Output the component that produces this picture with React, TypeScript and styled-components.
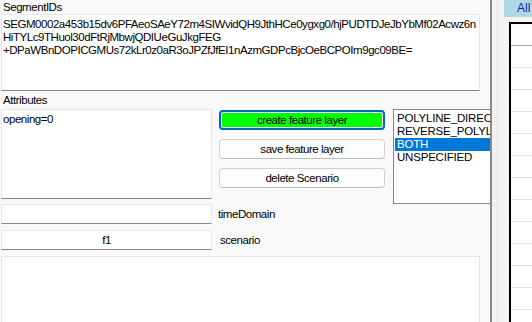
import React from "react";
import styled, { createGlobalStyle } from "styled-components";

const GlobalStyle = createGlobalStyle`
  html, body {
    margin: 0;
    padding: 0;
    background: #f9f9f9;
  }
  body {
    font-family: "Liberation Sans", Arial, sans-serif;
    font-size: 11.5px;
    letter-spacing: -0.45px;
    color: #000;
  }
`;

const Window = styled.div`
  display: grid;
  grid-template-columns: 490px 14px 28px;
  grid-template-rows: 322px;
  width: 532px;
  height: 322px;
  overflow: hidden;
  background: #f9f9f9;
`;

const LeftPane = styled.div`
  min-width: 0;
  padding-left: 1px;
  overflow: hidden;
  display: flex;
  flex-direction: column;
`;

const Caption = styled.div<{ $top?: number }>`
  height: 15px;
  line-height: 14px;
  padding-left: 2px;
  margin-top: ${(p) => p.$top ?? 0}px;
`;

const TextBox = styled.div<{ $w: number; $h: number; $top?: number; $center?: boolean }>`
  flex: none;
  box-sizing: border-box;
  width: ${(p) => p.$w}px;
  height: ${(p) => p.$h}px;
  margin-top: ${(p) => p.$top ?? 0}px;
  background: #fff;
  border: 1px solid #e6e6e6;
  border-bottom-color: #868686;
  padding: 3px 1px;
  line-height: 13px;
  white-space: pre;
  overflow: hidden;
  text-align: ${(p) => (p.$center ? "center" : "left")};
`;

const EditRow = styled.div`
  display: flex;
  align-items: flex-start;
  height: 97px;
  margin-top: 2px;
`;

const ButtonColumn = styled.div`
  flex: none;
  display: flex;
  flex-direction: column;
  gap: 9px;
  margin-left: 7px;
  padding-top: 1px;
`;

const Button = styled.div<{ $accent?: boolean }>`
  box-sizing: border-box;
  width: 166px;
  height: 20px;
  line-height: 18px;
  text-align: center;
  border-radius: 4px;
  border: 1px solid #d0d0d0;
  border-bottom-color: #bcbcbc;
  background: #fdfdfd;
  ${(p) =>
    p.$accent &&
    `
    border: 2px solid #0067c0;
    padding: 1px;
    line-height: 14px;
    background: #00ff00;
    background-clip: content-box;
  `}
`;

const ListBox = styled.div`
  flex: none;
  box-sizing: border-box;
  width: 130px;
  height: 95px;
  margin-left: 8px;
  background: #fff;
  border: 1px solid #828790;
  padding: 2px 0 0 1px;
`;

const ListItem = styled.div<{ $selected?: boolean }>`
  height: 13px;
  line-height: 13px;
  padding-left: 2px;
  letter-spacing: -0.2px;
  background: ${(p) => (p.$selected ? "#0078d7" : "transparent")};
  color: ${(p) => (p.$selected ? "#fff" : "#000")};
`;

const FieldRow = styled.div<{ $top: number }>`
  display: flex;
  align-items: center;
  margin-top: ${(p) => p.$top}px;
`;

const FieldLabel = styled.span<{ $gap: number }>`
  margin-left: ${(p) => p.$gap}px;
`;

const Splitter = styled.div`
  box-sizing: border-box;
  border-left: 2px solid #8a8a8a;
  background: #f2f2f2;
  display: flex;
`;

const SplitterGroove = styled.div`
  width: 5px;
  border-right: 1px solid #e2e2e2;
`;

const RightPane = styled.div`
  display: flex;
  flex-direction: column;
  background: #f4f4f4;
  overflow: hidden;
`;

const TabHeader = styled.div`
  flex: none;
  height: 17px;
  line-height: 17px;
  background: #add8e6;
  color: #1c1ca8;
  font-size: 12px;
  letter-spacing: 0;
  padding-left: 13px;
`;

const Grid = styled.div`
  flex: 1;
  margin: 5px 0 0 5px;
  border-left: 2px solid #000;
  border-top: 2px solid #000;
  background: #fff;
  overflow: hidden;
`;

const GridRow = styled.div<{ $first?: boolean }>`
  box-sizing: border-box;
  height: 22px;
  border-bottom: 1px solid ${(p) => (p.$first ? "#a0a0a0" : "#e3e3e3")};
`;

const directions = ["POLYLINE_DIRECTION", "REVERSE_POLYLINE", "BOTH", "UNSPECIFIED"];

export default function App() {
  const selected = "BOTH";

  return (
    <>
      <GlobalStyle />
      <Window>
        <LeftPane>
          <Caption>SegmentIDs</Caption>
          <TextBox $w={479} $h={77}>
            {"SEGM0002a453b15dv6PFAeoSAeY72m4SIWvidQH9JthHCe0ygxg0/hjPUDTDJeJbYbMf02Acwz6n\n" +
              "HiTYLc9THuol30dFtRjMbwjQDIUeGuJkgFEG\n" +
              "+DPaWBnDOPICGMUs72kLr0z0aR3oJPZfJfEI1nAzmGDPcBjcOeBCPOIm9gc09BE="}
          </TextBox>
          <Caption $top={2}>Attributes</Caption>
          <EditRow>
            <TextBox $w={211} $h={90}>
              opening=0
            </TextBox>
            <ButtonColumn>
              <Button $accent>create feature layer</Button>
              <Button>save feature layer</Button>
              <Button>delete Scenario</Button>
            </ButtonColumn>
            <ListBox>
              {directions.map((d) => (
                <ListItem key={d} $selected={d === selected}>
                  {d}
                </ListItem>
              ))}
            </ListBox>
          </EditRow>
          <FieldRow $top={0}>
            <TextBox $w={211} $h={20} />
            <FieldLabel $gap={6}>timeDomain</FieldLabel>
          </FieldRow>
          <FieldRow $top={6}>
            <TextBox $w={211} $h={20} $center>
              f1
            </TextBox>
            <FieldLabel $gap={8}>scenario</FieldLabel>
          </FieldRow>
          <TextBox $w={479} $h={80} $top={6} />
        </LeftPane>
        <Splitter>
          <SplitterGroove />
        </Splitter>
        <RightPane>
          <TabHeader>All</TabHeader>
          <Grid>
            {Array.from({ length: 14 }).map((_, i) => (
              <GridRow key={i} $first={i === 0} />
            ))}
          </Grid>
        </RightPane>
      </Window>
    </>
  );
}
